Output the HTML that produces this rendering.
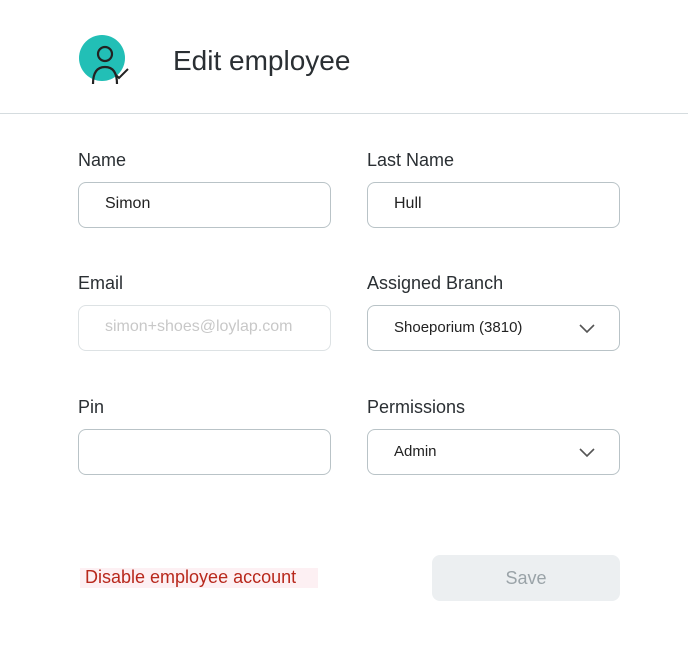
<!DOCTYPE html><html><head><style>
body{margin:0;width:688px;height:646px;background:#fff;font-family:"Liberation Sans",sans-serif;position:relative;overflow:hidden}
.a{position:absolute}
.lbl{font-size:18px;color:#2a2f33}
.in{position:absolute;width:253px;height:46px;border:1px solid #b9c3c7;border-radius:8px;box-sizing:border-box;font-size:16px;color:#222;line-height:42px}
.chev{position:absolute;right:24px;top:16px}
</style></head><body>
<svg class="a" style="left:78px;top:34px" width="60" height="52">
<circle cx="24" cy="24" r="23" fill="#22bfb6"/>
<circle cx="27" cy="20" r="7" fill="none" stroke="#222" stroke-width="2.2"/>
<path d="M15 50 Q15 33 27 33 Q39 33 39 50" fill="none" stroke="#222" stroke-width="2.2"/>
<path d="M37 40 L41 44 L50 35" fill="none" stroke="#222" stroke-width="2"/>
</svg>
<div class="a" style="left:173px;top:45px;font-size:28px;color:#2a2f33">Edit employee</div>
<div class="a" style="left:0;top:113px;width:688px;height:1px;background:#d5dcdf"></div>
<div class="a lbl" style="left:78px;top:150px">Name</div>
<div class="a lbl" style="left:367px;top:150px">Last Name</div>
<div class="in" style="left:78px;top:182px;padding-left:26px">Simon</div>
<div class="in" style="left:367px;top:182px;padding-left:26px">Hull</div>
<div class="a lbl" style="left:78px;top:273px">Email</div>
<div class="a lbl" style="left:367px;top:273px">Assigned Branch</div>
<div class="in" style="left:78px;top:305px;padding-left:26px;color:#c8c8c8;border-color:#dde2e4;overflow:hidden;white-space:nowrap">simon+shoes@loylap.com</div>
<div class="in" style="left:367px;top:305px;padding-left:26px;font-size:15px;line-height:44px">Shoeporium (3810)<svg class="chev" width="16" height="12"><path d="M1 3 L8 10 L15 3" fill="none" stroke="#555" stroke-width="1.6"/></svg></div>
<div class="a lbl" style="left:78px;top:397px">Pin</div>
<div class="a lbl" style="left:367px;top:397px">Permissions</div>
<div class="in" style="left:78px;top:429px"></div>
<div class="in" style="left:367px;top:429px;padding-left:26px;font-size:15px;line-height:44px">Admin<svg class="chev" width="16" height="12"><path d="M1 3 L8 10 L15 3" fill="none" stroke="#555" stroke-width="1.6"/></svg></div>
<div class="a" style="left:80px;top:568px;width:238px;height:20px;background:#fdf0f3"></div>
<div class="a" style="left:85px;top:567px;font-size:18px;color:#b8281c">Disable employee account</div>
<div class="a" style="left:432px;top:555px;width:188px;height:46px;border-radius:8px;background:#eceff1;color:#9aa3a8;font-size:18px;text-align:center;line-height:46px">Save</div>
</body></html>
